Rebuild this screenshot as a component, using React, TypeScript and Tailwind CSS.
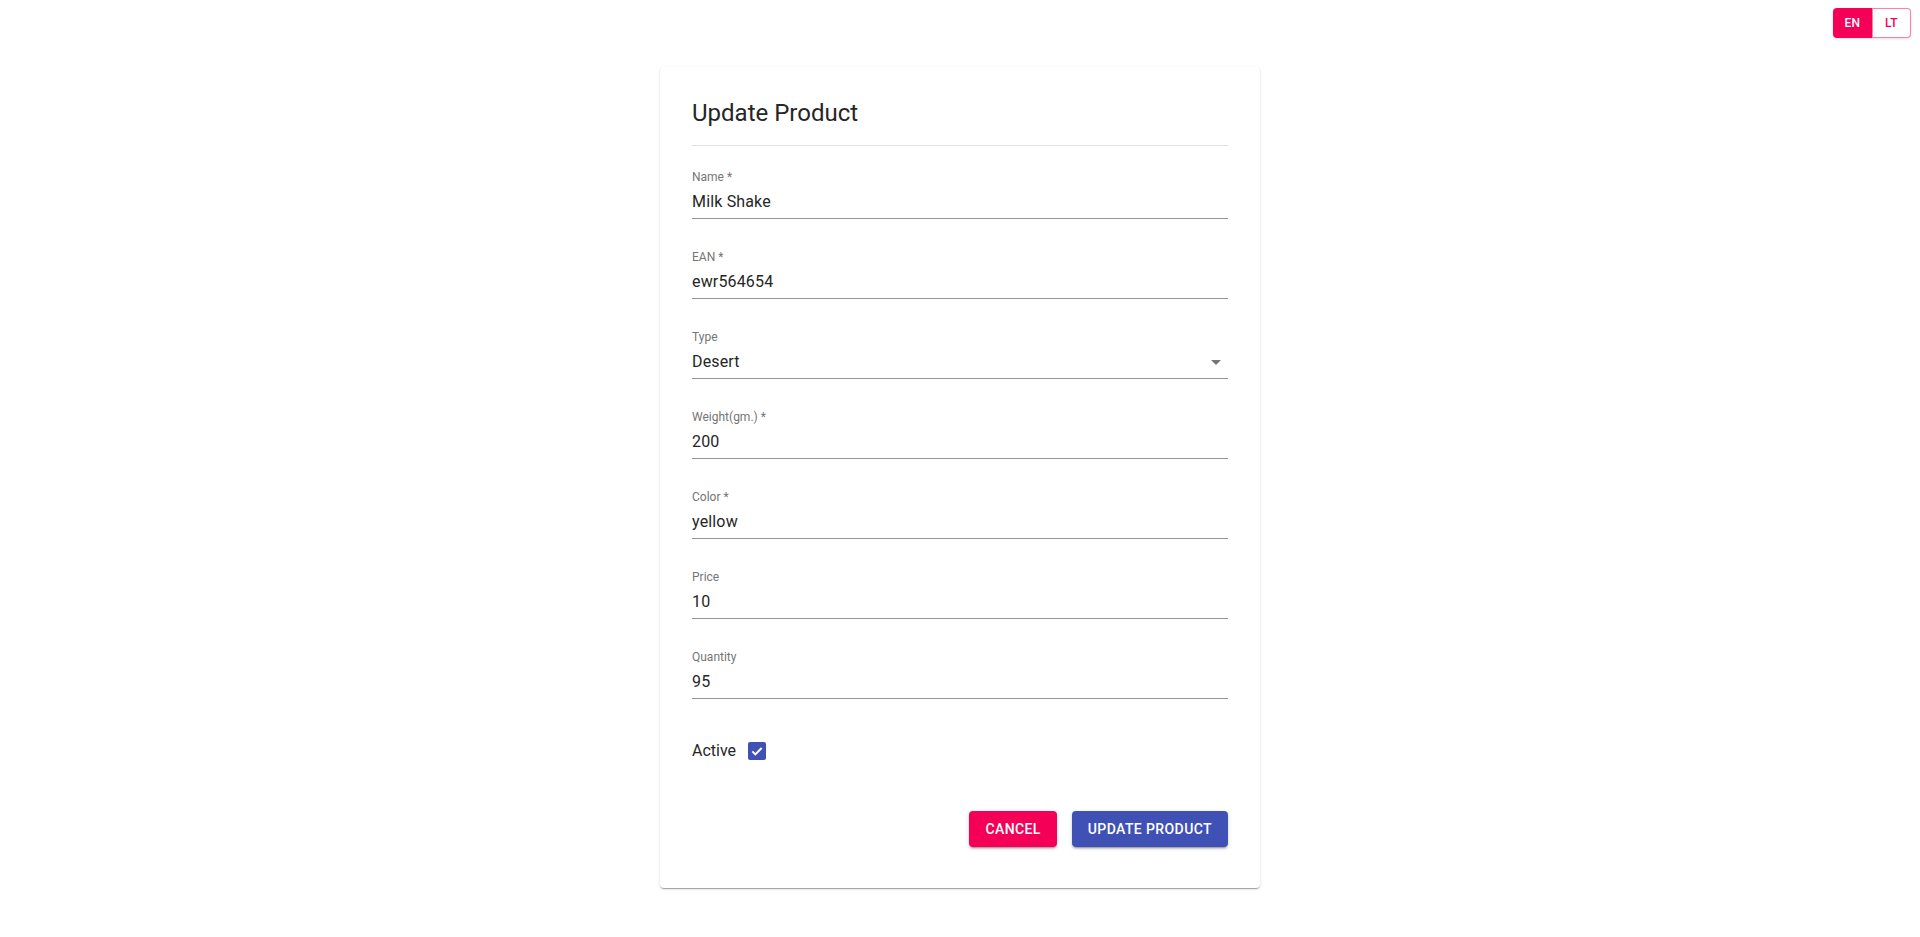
import React, { useState } from "react";

const fields = [
  { label: "Name *", value: "Milk Shake" },
  { label: "EAN *", value: "ewr564654" },
  { label: "Type", value: "Desert", select: true },
  { label: "Weight(gm.) *", value: "200" },
  { label: "Color *", value: "yellow" },
  { label: "Price", value: "10" },
  { label: "Quantity", value: "95" },
];

function Field({ label, value, select }: { label: string; value: string; select?: boolean }) {
  return (
    <div className="flex flex-col">
      <label className="text-[12px] leading-[12px] text-[#757575]">{label}</label>
      <div className="relative flex items-center pt-[9px] pb-[7px] border-b border-[#949494]">
        <span className="text-[16px] leading-[19px] text-[#262626] tracking-[0.01em]">{value}</span>
        {select && (
          <svg viewBox="0 0 24 24" className="absolute right-0 top-[7px] h-6 w-6 fill-[#757575]">
            <path d="M7 10l5 5 5-5z" />
          </svg>
        )}
      </div>
    </div>
  );
}

export default function App() {
  const [lang, setLang] = useState("EN");
  const [active, setActive] = useState(true);

  return (
    <div className="min-h-screen bg-white font-['Roboto',sans-serif]">
      {/* Language toggle */}
      <div className="flex justify-end pt-2 pr-[9px]">
        <div className="flex h-[30px] rounded-[4px] shadow-[0px_1px_3px_0px_rgba(0,0,0,0.12)]">
          {["EN", "LT"].map((l, i) => (
            <button
              key={l}
              onClick={() => setLang(l)}
              className={
                "w-[39px] text-[12px] font-medium tracking-[0.03em] " +
                (i === 0 ? "rounded-l-[4px] " : "rounded-r-[4px] ") +
                (lang === l
                  ? "bg-[#f50057] text-white"
                  : "bg-white text-[#f50057] border border-[rgba(245,0,87,0.5)]")
              }
            >
              {l}
            </button>
          ))}
        </div>
      </div>

      <div className="flex justify-center mt-[29px]">
        <div className="w-[600px] rounded-[4px] bg-white px-8 pt-[30px] pb-[41px] shadow-[0px_2px_1px_-1px_rgba(0,0,0,0.2),0px_1px_1px_0px_rgba(0,0,0,0.14),0px_1px_3px_0px_rgba(0,0,0,0.12)]">
          <h2 className="text-[24px] leading-[32px] text-[#262626]">Update Product</h2>
          <div className="mt-[16px] h-px bg-[#e0e0e0]" />

          <div className="mt-[25px] flex flex-col gap-8">
            {fields.map((f) => (
              <Field key={f.label} label={f.label} value={f.value} select={f.select} />
            ))}
          </div>

          <label className="mt-[42px] flex items-center gap-[12px] cursor-pointer">
            <span className="text-[16px] leading-[19px] text-[#262626]">Active</span>
            <span
              onClick={() => setActive(!active)}
              className={
                "flex h-[18px] w-[18px] items-center justify-center rounded-[2px] " +
                (active ? "bg-[#3f51b5]" : "border-2 border-[#757575]")
              }
            >
              {active && (
                <svg viewBox="0 0 24 24" className="h-[16px] w-[16px]" fill="none" stroke="white" strokeWidth="3">
                  <path d="M5 12.5l4.5 4.5L19 7.5" />
                </svg>
              )}
            </span>
          </label>

          <div className="mt-[51px] flex justify-end gap-[15px]">
            <button className="h-9 rounded-[4px] bg-[#f50057] px-4 text-[14px] font-medium uppercase tracking-[0.02857em] text-white shadow-[0px_3px_1px_-2px_rgba(0,0,0,0.2),0px_2px_2px_0px_rgba(0,0,0,0.14),0px_1px_5px_0px_rgba(0,0,0,0.12)]">
              Cancel
            </button>
            <button className="h-9 rounded-[4px] bg-[#3f51b5] px-4 text-[14px] font-medium uppercase tracking-[0.02857em] text-white shadow-[0px_3px_1px_-2px_rgba(0,0,0,0.2),0px_2px_2px_0px_rgba(0,0,0,0.14),0px_1px_5px_0px_rgba(0,0,0,0.12)]">
              Update Product
            </button>
          </div>
        </div>
      </div>
    </div>
  );
}
